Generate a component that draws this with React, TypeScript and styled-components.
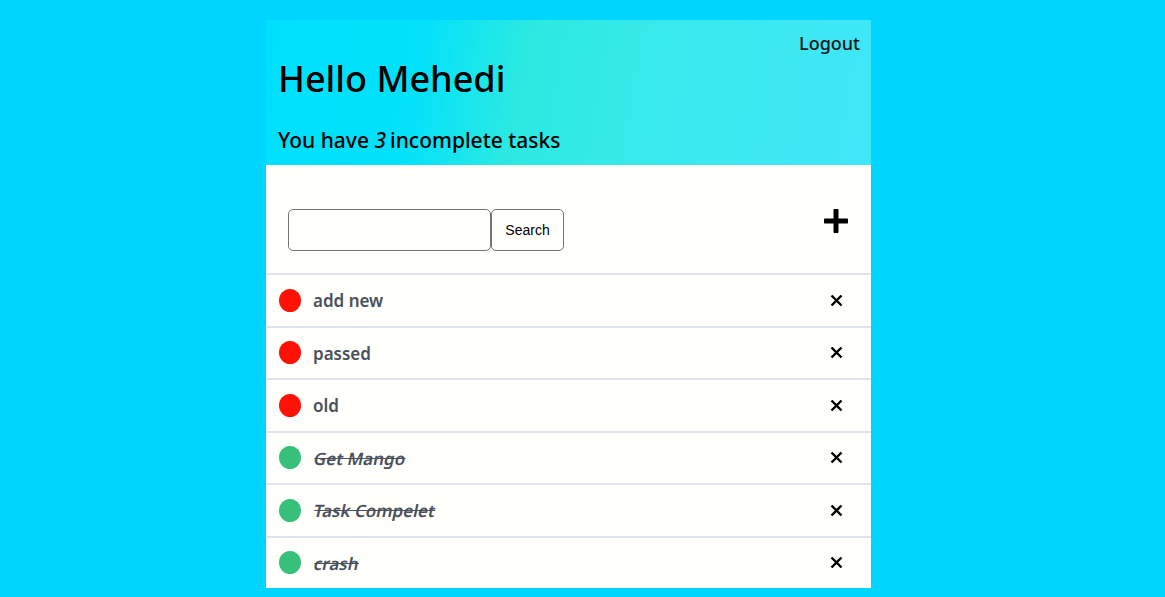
import React from "react";
import styled, { createGlobalStyle } from "styled-components";

const Global = createGlobalStyle`
  html, body { margin: 0; padding: 0; background: #00d5ff; }
  body { font-family: "Noto Sans", "Open Sans", sans-serif; }
`;

const Page = styled.div`
  display: flex;
  justify-content: center;
  align-items: flex-start;
  padding: 20px 28px 0 0;
`;

const Card = styled.div`
  width: 605px;
  background: #fffffc;
  display: flex;
  flex-direction: column;
`;

const Header = styled.header`
  height: 145px;
  box-sizing: border-box;
  padding: 11px 11px 0 12px;
  background: linear-gradient(100deg, #00e0fd 0%, #03e1fb 25%, #2be9e1 42%, #38e9ea 62%, #40e7f9 100%);
  display: flex;
  flex-direction: column;
  color: #000;
`;

const LogoutRow = styled.div`
  display: flex;
  justify-content: flex-end;
`;

const Logout = styled.button`
  border: none;
  background: none;
  padding: 0;
  font-family: inherit;
  font-size: 18px;
  font-weight: 500;
  color: #151515;
  cursor: pointer;
`;

const Title = styled.h1`
  margin: 0;
  font-size: 36px;
  font-weight: 500;
  line-height: 48px;
`;

const Subtitle = styled.p`
  margin: 23px 0 0;
  font-size: 21px;
  font-weight: 500;
  line-height: 28px;
  em { font-style: italic; margin-right: 4px; }
`;

const Toolbar = styled.div`
  display: flex;
  justify-content: space-between;
  align-items: flex-start;
  padding: 44px 23px 22px 22px;
`;

const SearchForm = styled.form`
  display: flex;
`;

const SearchInput = styled.input`
  width: 203px;
  height: 42px;
  box-sizing: border-box;
  border: 1px solid #767676;
  border-radius: 5px;
  background: #fffffc;
`;

const SearchButton = styled.button`
  width: 73px;
  height: 42px;
  box-sizing: border-box;
  border: 1px solid #767676;
  border-radius: 5px;
  background: #fffffc;
  font-family: Arial, "Liberation Sans", sans-serif;
  font-size: 14px;
  color: #000;
`;

const IconButton = styled.button`
  border: none;
  background: none;
  padding: 0;
  display: flex;
  align-items: center;
  justify-content: center;
  cursor: pointer;
`;

const List = styled.ul`
  list-style: none;
  margin: 0;
  padding: 0;
`;

const Row = styled.li`
  display: flex;
  align-items: center;
  height: 52.5px;
  box-sizing: border-box;
  border-top: 2px solid #dfe3ea;
  padding: 0 28px 0 13px;
`;

const Dot = styled.span<{ $done: boolean }>`
  width: 22px;
  height: 23px;
  border-radius: 50%;
  background: ${(p) => (p.$done ? "#36c07a" : "#ff1106")};
  flex: none;
`;

const TaskCell = styled.div`
  flex: 1;
  margin-left: 12px;
  padding-top: 1px;
`;

const TaskText = styled.span<{ $done: boolean }>`
  display: inline-block;
  font-size: 17px;
  font-weight: 600;
  color: #4a505c;
  text-decoration: ${(p) => (p.$done ? "line-through" : "none")};
  transform: ${(p) => (p.$done ? "skewX(-12deg)" : "none")};
  transform-origin: 0 75%;
`;

const Plus = () => (
  <svg width="24" height="24" viewBox="0 0 24 24">
    <path d="M12 1.5v21M1.5 12h21" stroke="#000" strokeWidth="5" strokeLinecap="round" />
  </svg>
);

const Cross = () => (
  <svg width="13" height="13" viewBox="0 0 13 13">
    <path d="M1.5 1.5l10 10M11.5 1.5l-10 10" stroke="#000" strokeWidth="2.4" />
  </svg>
);

const tasks = [
  { name: "add new", done: false },
  { name: "passed", done: false },
  { name: "old", done: false },
  { name: "Get Mango", done: true },
  { name: "Task Compelet", done: true },
  { name: "crash", done: true },
];

export default function App() {
  return (
    <>
      <Global />
      <Page>
        <Card>
          <Header>
            <LogoutRow>
              <Logout>Logout</Logout>
            </LogoutRow>
            <Title>Hello Mehedi</Title>
            <Subtitle>
              You have <em>3</em>incomplete tasks
            </Subtitle>
          </Header>
          <Toolbar>
            <SearchForm onSubmit={(e) => e.preventDefault()}>
              <SearchInput type="text" />
              <SearchButton type="submit">Search</SearchButton>
            </SearchForm>
            <IconButton aria-label="add">
              <Plus />
            </IconButton>
          </Toolbar>
          <List>
            {tasks.map((t) => (
              <Row key={t.name}>
                <Dot $done={t.done} />
                <TaskCell>
                  <TaskText $done={t.done}>{t.name}</TaskText>
                </TaskCell>
                <IconButton aria-label="delete">
                  <Cross />
                </IconButton>
              </Row>
            ))}
          </List>
        </Card>
      </Page>
    </>
  );
}
